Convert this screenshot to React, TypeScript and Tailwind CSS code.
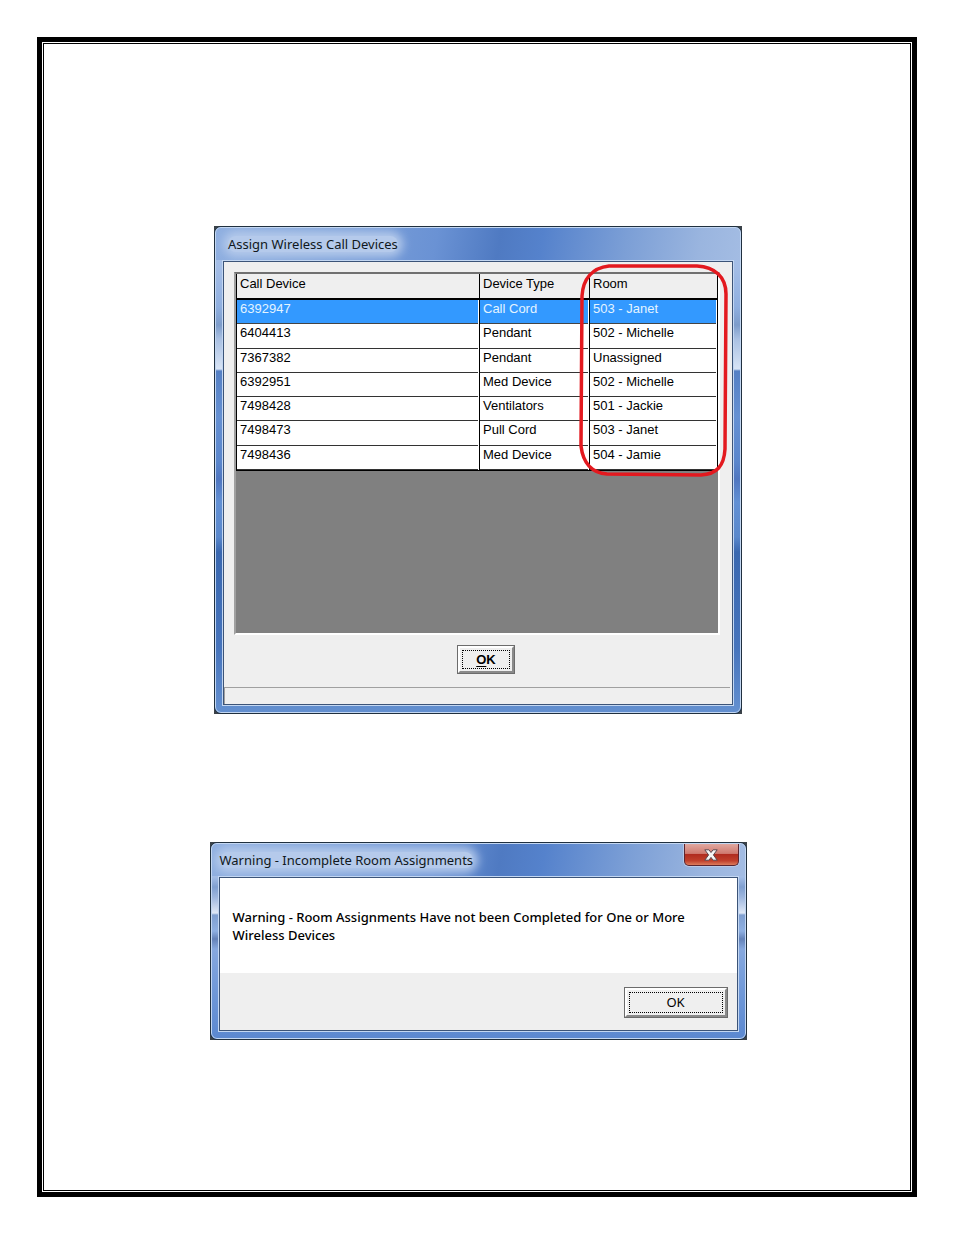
import type { ReactNode } from "react";

type Device = { id: string; type: string; room: string };

const devices: Device[] = [
  { id: "6392947", type: "Call Cord", room: "503 - Janet" },
  { id: "6404413", type: "Pendant", room: "502 - Michelle" },
  { id: "7367382", type: "Pendant", room: "Unassigned" },
  { id: "6392951", type: "Med Device", room: "502 - Michelle" },
  { id: "7498428", type: "Ventilators", room: "501 - Jackie" },
  { id: "7498473", type: "Pull Cord", room: "503 - Janet" },
  { id: "7498436", type: "Med Device", room: "504 - Jamie" },
];

const tallGlass =
  "bg-[linear-gradient(180deg,#a9c3e8_0px,#a3bde6_40px,#8fafdf_80px,#7d9cca_98px,#a9c0e2_112px,#d8e4f5_142px,#5580c4_144px,#6590d2_190px,#5a86cc_235px,#4f76c0_252px,#6290d4_275px,#5a88cc_310px,#3a68b0_325px,#4674bc_420px,#6490d0_100%)]";

const shortGlass =
  "bg-[linear-gradient(180deg,#a9c3e8_0px,#a3bde6_34px,#7f9fd0_44px,#9db6de_54px,#dfe8f6_70px,#7f9fd0_72px,#8fb0e2_88px,#6482b8_96px,#86a8de_106px,#6f98d8_150px,#5b88d0_100%)]";

function CloseIcon() {
  return (
    <svg width="14" height="12" viewBox="0 0 14 12" aria-hidden="true">
      <path
        d="M.8.8h4.1L7 3.5 9.1.8h4.1L9.4 5.9l3.8 5.3H9.1L7 8.4l-2.1 2.8H.8l3.8-5.3z"
        fill="#f6f6f6"
        stroke="#5a4850"
        strokeWidth="1"
        strokeLinejoin="round"
      />
    </svg>
  );
}

function DialogWindow({
  title,
  titleInset,
  glass,
  closable,
  children,
}: {
  title: string;
  titleInset: string;
  glass: string;
  closable?: boolean;
  children: ReactNode;
}) {
  return (
    <div className="bg-[#3a4148]">
      <div className={`overflow-hidden rounded-[7px] border border-[#20303f] ${glass}`}>
        <div className="flex flex-col overflow-hidden rounded-[6px] border border-[#c3d7f2]">
          <header
            className={`flex h-8 items-start justify-between bg-[linear-gradient(100deg,#8fafe0_0%,#7fa3da_20%,#6a92d4_42%,#4f7ac2_54%,#5582cc_62%,#7c9fd6_78%,#9ab5df_92%,#a3bce3_100%)] pr-[6px] ${titleInset}`}
          >
            <h2 className="my-2 flex h-4 items-center rounded-lg bg-[#b5caeb] text-[13px] leading-4 font-normal text-[#101820] shadow-[0_0_10px_5px_#b5caeb]">
              {title}
            </h2>
            {closable && (
              <button
                type="button"
                aria-label="Close"
                className="flex h-[22px] w-[55px] items-center justify-center rounded-b-[5px] border border-t-0 border-[#5b2530] bg-[linear-gradient(180deg,#e0a79f_0%,#cf7a70_45%,#b02c20_50%,#c0402c_80%,#dc7c5c_100%)] shadow-[0_0_0_1px_#b9c9e6]"
              >
                <CloseIcon />
              </button>
            )}
          </header>
          <div className="mx-[6px] mb-[6px] border border-[#c3d7f2]">
            <div className="border border-[#3c5478] bg-[#efefef]">{children}</div>
          </div>
        </div>
      </div>
    </div>
  );
}

function PushButton({ className, children }: { className: string; children: ReactNode }) {
  return (
    <button
      type="button"
      className={`border border-[#6c6c6c] bg-[#efefef] text-black ${className}`}
    >
      <span className="flex h-full border-2 border-t-white border-r-[#8a8a8a] border-b-[#8a8a8a] border-l-white p-[2px]">
        <span className="flex flex-1 items-center justify-center border border-dotted border-black">
          {children}
        </span>
      </span>
    </button>
  );
}

function HeaderCell({ children }: { children: ReactNode }) {
  return (
    <th
      scope="col"
      className="border-r border-b-2 border-black bg-[#efefef] px-[3px] pt-px pb-0 text-left align-top font-normal"
    >
      {children}
    </th>
  );
}

function BodyCell({ selected, children }: { selected: boolean; children: ReactNode }) {
  return (
    <td className="h-px border-r border-r-black bg-white p-0 align-top">
      <div
        className={
          selected
            ? "mr-px h-full border-b border-[#444] bg-[#3399ff] px-[3px] text-[#e4f4ff]"
            : "mr-px h-full border-b border-[#333] px-[3px]"
        }
      >
        {children}
      </div>
    </td>
  );
}

function DeviceTable() {
  return (
    <table className="h-[197px] w-full table-fixed border-separate border-spacing-0 border-b border-l border-black text-[13px] leading-[18px] text-black">
      <colgroup>
        <col />
        <col className="w-[110px]" />
        <col className="w-[128px]" />
      </colgroup>
      <thead>
        <tr className="h-[26px]">
          <HeaderCell>Call Device</HeaderCell>
          <HeaderCell>Device Type</HeaderCell>
          <HeaderCell>Room</HeaderCell>
        </tr>
      </thead>
      <tbody>
        {devices.map((device, index) => (
          <tr key={device.id}>
            <BodyCell selected={index === 0}>{device.id}</BodyCell>
            <BodyCell selected={index === 0}>{device.type}</BodyCell>
            <BodyCell selected={index === 0}>{device.room}</BodyCell>
          </tr>
        ))}
      </tbody>
    </table>
  );
}

function RoomHighlight() {
  return (
    <svg
      className="pointer-events-none absolute -top-[12px] -right-[11px]"
      width="150"
      height="218"
      viewBox="0 0 150 218"
      fill="none"
      aria-hidden="true"
    >
      <path
        d="M30 4H118C136 5 147 15 147 32L146 187C145 204 138 212 122 213L28 212C13 211 4 201 2 184L3 34C4 17 13 6 30 4Z"
        stroke="#e3191f"
        strokeWidth="3.5"
      />
    </svg>
  );
}

export default function App() {
  return (
    <div className="flex min-h-screen bg-white px-[37px] pt-[37px] pb-[38px] font-['Liberation_Sans',Arial,sans-serif]">
      <div className="flex flex-1 border-[5px] border-black p-px">
        <main className="flex flex-1 flex-col items-center gap-32 border border-black pt-[182px] pr-4 pb-16 pl-[18px]">
          <section className="w-full max-w-[528px] font-['Noto_Sans',sans-serif]">
            <DialogWindow
              title="Assign Wireless Call Devices"
              titleInset="pl-3"
              glass={tallGlass}
            >
              <div className="flex flex-col font-['Liberation_Sans',Arial,sans-serif]">
                <div className="relative mt-[10px] mr-3 ml-[10px] border-2 border-t-[#707070] border-r-white border-b-white border-l-[#a0a0a0] bg-[#808080] pb-[162px]">
                  <DeviceTable />
                  <RoomHighlight />
                </div>
                <div className="flex justify-center pt-[10px] pb-[13px] pl-[16px]">
                  <PushButton className="h-[29px] w-[58px] text-[13px] font-bold">
                    <span className="underline underline-offset-2">O</span>K
                  </PushButton>
                </div>
                <div className="mr-[2px] h-[17px] border-t border-l border-[#a0a0a0]" />
              </div>
            </DialogWindow>
          </section>

          <section className="w-full max-w-[537px] font-['Noto_Sans',sans-serif]">
            <DialogWindow
              title="Warning - Incomplete Room Assignments"
              titleInset="pl-2"
              glass={shortGlass}
              closable
            >
              <p className="h-[95px] bg-white pt-[30px] pr-10 pl-[13px] text-[13px] leading-[18px] font-medium text-black">
                Warning - Room Assignments Have not been Completed for One or More Wireless Devices
              </p>
              <div className="flex justify-end pt-[14px] pr-[9px] pb-[12px]">
                <PushButton className="h-[31px] w-[104px] text-[13px]">OK</PushButton>
              </div>
            </DialogWindow>
          </section>
        </main>
      </div>
    </div>
  );
}
